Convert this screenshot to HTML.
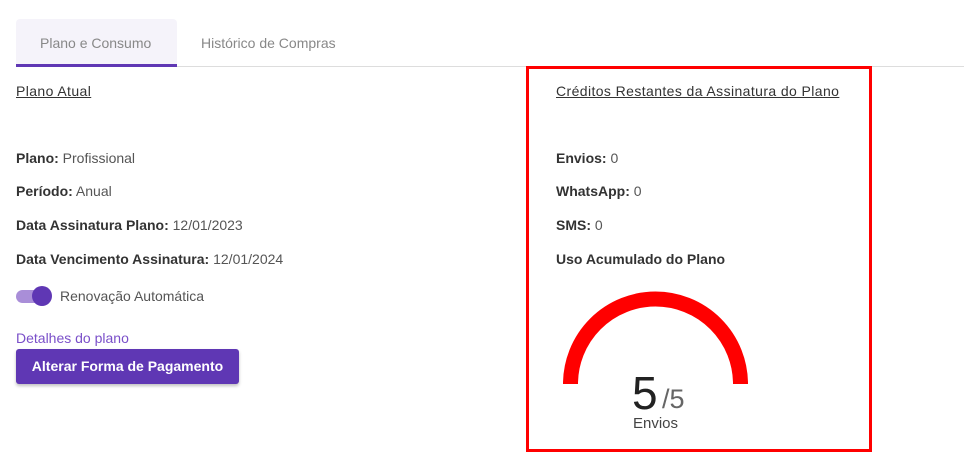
<!DOCTYPE html>
<html><head><meta charset="utf-8"><style>
body{margin:0;width:964px;height:475px;background:#fff;font-family:"Liberation Sans",sans-serif;color:#333;position:relative;overflow:hidden}
.a{position:absolute;white-space:nowrap;font-size:14px;line-height:16px}
b{font-weight:bold;color:#333}
.v{color:#555}
.h{text-decoration:underline;letter-spacing:0.4px;color:#333}
</style></head><body>
<div style="position:absolute;left:16px;top:19px;width:161px;height:47px;background:#f5f3fa;border-radius:4px 4px 0 0"></div>
<div style="position:absolute;left:16px;top:66px;width:948px;height:1px;background:#ddd"></div>
<div style="position:absolute;left:16px;top:64px;width:161px;height:3px;background:#5f37b4"></div>
<div class="a" style="left:40px;top:35px;color:#888">Plano e Consumo</div>
<div class="a" style="left:201px;top:35px;color:#888">Histórico de Compras</div>

<div class="a h" style="left:16px;top:83px">Plano Atual</div>
<div class="a" style="left:16px;top:150px"><b>Plano:</b> <span class="v">Profissional</span></div>
<div class="a" style="left:16px;top:183px"><b>Período:</b> <span class="v">Anual</span></div>
<div class="a" style="left:16px;top:217px"><b>Data Assinatura Plano:</b> <span class="v">12/01/2023</span></div>
<div class="a" style="left:16px;top:251px"><b>Data Vencimento Assinatura:</b> <span class="v">12/01/2024</span></div>
<div style="position:absolute;left:16px;top:290px;width:30px;height:13px;border-radius:7px;background:#a98ed8"></div>
<div style="position:absolute;left:32px;top:286px;width:20px;height:20px;border-radius:50%;background:#5f37b4"></div>
<div class="a" style="left:60px;top:288px;color:#555">Renovação Automática</div>
<div class="a" style="left:16px;top:330px;color:#7a4fc9">Detalhes do plano</div>
<div style="position:absolute;left:16px;top:349px;width:223px;height:35px;background:#5f37b4;border-radius:3px;box-shadow:0 2px 3px rgba(0,0,0,.25);color:#fff;font-weight:bold;font-size:14px;line-height:35px;text-align:center">Alterar Forma de Pagamento</div>

<div style="position:absolute;left:526px;top:66px;width:340px;height:380px;border:3px solid #f00"></div>
<div class="a h" style="left:556px;top:83px">Créditos Restantes da Assinatura do Plano</div>
<div class="a" style="left:556px;top:150px"><b>Envios:</b> <span class="v">0</span></div>
<div class="a" style="left:556px;top:183px"><b>WhatsApp:</b> <span class="v">0</span></div>
<div class="a" style="left:556px;top:217px"><b>SMS:</b> <span class="v">0</span></div>
<div class="a" style="left:556px;top:251px"><b>Uso Acumulado do Plano</b></div>
<svg style="position:absolute;left:0;top:0" width="964" height="475"><path d="M570.5 384 A85 85 0 0 1 740.5 384" fill="none" stroke="#f00" stroke-width="15"/></svg>
<div class="a" style="left:632px;top:370px;font-size:46px;line-height:46px;color:#222">5</div>
<div class="a" style="left:662px;top:386px;font-size:27px;line-height:27px;color:#666">/5</div>
<div class="a" style="left:633px;top:416px;font-size:15px;color:#444">Envios</div>
</body></html>
